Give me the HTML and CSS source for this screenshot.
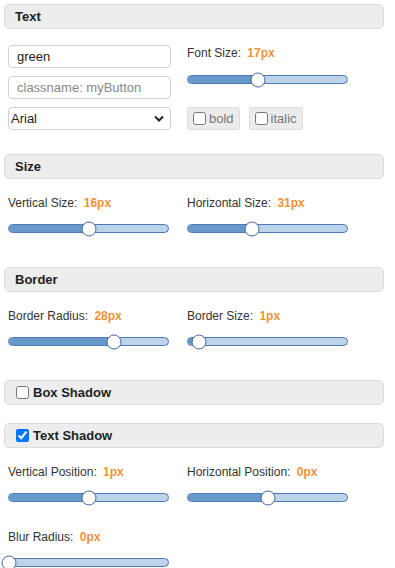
FILE: index.html
```html
<!DOCTYPE html>
<html lang="en">
<head>
  <meta charset="UTF-8">
  <meta name="viewport" content="width=device-width, initial-scale=1.0">
  <title>Button Generator</title>
  <link rel="stylesheet" href="styles.css">
</head>
<body>
  <div class="panel">

    <div class="section-head">Text</div>
    <div class="controls text-controls">
      <div class="stack">
        <input class="field" type="text" value="green">
        <input class="field" type="text" placeholder="classname: myButton">
        <select class="field select">
          <option>Arial</option>
        </select>
      </div>
      <div class="stack">
        <div class="label">Font Size: <span class="value">17px</span></div>
        <div class="slider"><div class="fill" style="width: 44%"></div><div class="thumb" style="left: 44%"></div></div>
        <div class="toggles">
          <label class="toggle"><input type="checkbox"> bold</label>
          <label class="toggle"><input type="checkbox"> italic</label>
        </div>
      </div>
    </div>

    <div class="section-head">Size</div>
    <div class="controls">
      <div>
        <div class="label">Vertical Size: <span class="value">16px</span></div>
        <div class="slider"><div class="fill" style="width: 50%"></div><div class="thumb" style="left: 50%"></div></div>
      </div>
      <div>
        <div class="label">Horizontal Size: <span class="value">31px</span></div>
        <div class="slider"><div class="fill" style="width: 40%"></div><div class="thumb" style="left: 40%"></div></div>
      </div>
    </div>

    <div class="section-head">Border</div>
    <div class="controls">
      <div>
        <div class="label">Border Radius: <span class="value">28px</span></div>
        <div class="slider"><div class="fill" style="width: 66%"></div><div class="thumb" style="left: 66%"></div></div>
      </div>
      <div>
        <div class="label">Border Size: <span class="value">1px</span></div>
        <div class="slider"><div class="fill" style="width: 7%"></div><div class="thumb" style="left: 7%"></div></div>
      </div>
    </div>

    <div class="section-head"><label><input type="checkbox"> Box Shadow</label></div>
    <div class="section-head"><label><input type="checkbox" checked> Text Shadow</label></div>
    <div class="controls">
      <div>
        <div class="label">Vertical Position: <span class="value">1px</span></div>
        <div class="slider"><div class="fill" style="width: 50%"></div><div class="thumb" style="left: 50%"></div></div>
      </div>
      <div>
        <div class="label">Horizontal Position: <span class="value">0px</span></div>
        <div class="slider"><div class="fill" style="width: 50%"></div><div class="thumb" style="left: 50%"></div></div>
      </div>
      <div class="wide-row">
        <div class="label">Blur Radius: <span class="value">0px</span></div>
        <div class="slider"><div class="fill" style="width: 0%"></div><div class="thumb" style="left: 0%"></div></div>
      </div>
    </div>

  </div>
</body>
</html>
```

FILE: styles.css
```css
body {
  margin: 0;
  font-family: 'Liberation Sans', Arial, sans-serif;
  font-size: 13px;
  color: #333;
  background: #fff;
}

.panel {
  padding: 4px 11px 0 4px;
}

.section-head {
  height: 25px;
  box-sizing: border-box;
  display: flex;
  align-items: center;
  padding-left: 10px;
  background: #ededed;
  border: 1px solid #dcdcdc;
  border-radius: 5px;
  font-weight: bold;
  color: #222;
  margin-bottom: 18px;
}

.section-head label {
  display: flex;
  align-items: center;
}

.section-head input {
  width: 13px;
  height: 13px;
  margin: 0 4px 0 1px;
}

.controls {
  display: grid;
  grid-template-columns: 162px 162px;
  column-gap: 17px;
  row-gap: 24px;
  padding: 0 0 0 4px;
  margin-top: -2px;
  margin-bottom: 31px;
}

.text-controls {
  margin-bottom: 24px;
}

.wide-row {
  grid-column: 1 / 2;
}

.stack {
  display: flex;
  flex-direction: column;
  gap: 8px;
}

.field {
  width: 163px;
  height: 23px;
  box-sizing: border-box;
  border: 1px solid #d0d0d0;
  border-radius: 4px;
  padding: 0 8px;
  font-family: 'Liberation Sans', Arial, sans-serif;
  font-size: 13px;
  color: #222;
  background: #fff;
  margin: 0;
}

.field::placeholder {
  color: #888;
}

.select {
  appearance: none;
  -webkit-appearance: none;
  padding-left: 2px;
  background-image: url("data:image/svg+xml,%3Csvg xmlns='http://www.w3.org/2000/svg' width='10' height='7' viewBox='0 0 10 7'%3E%3Cpath d='M1 1.5l4 4 4-4' fill='none' stroke='%23222' stroke-width='2'/%3E%3C/svg%3E");
  background-repeat: no-repeat;
  background-position: right 6px center;
}

.label {
  height: 16px;
  line-height: 16px;
  font-size: 12px;
  white-space: nowrap;
}

.value {
  color: #f0913a;
  font-weight: bold;
  margin-left: 3px;
}

.slider {
  position: relative;
  width: 161px;
  height: 9px;
  box-sizing: border-box;
  margin: 13px 0 3px;
  background: #bcd4ea;
  border: 1px solid #5079b8;
  border-radius: 5px;
}

.text-controls .slider {
  margin-top: 6px;
}

.fill {
  height: 100%;
  background: #6899cb;
  border-radius: 4px 0 0 4px;
}

.thumb {
  position: absolute;
  top: 50%;
  width: 15px;
  height: 15px;
  box-sizing: border-box;
  background: #fff;
  border: 1.5px solid #44679f;
  border-radius: 50%;
  transform: translate(-50%, -50%);
}

.toggles {
  display: flex;
  gap: 9px;
  margin-top: 12px;
}

.toggle {
  display: flex;
  align-items: center;
  height: 23px;
  box-sizing: border-box;
  padding: 0 5px;
  background: #ececec;
  border: 1px solid #dcdcdc;
  border-radius: 3px;
  color: #777;
}

.toggle input {
  width: 13px;
  height: 13px;
  margin: 0 3px 0 0;
}
```
